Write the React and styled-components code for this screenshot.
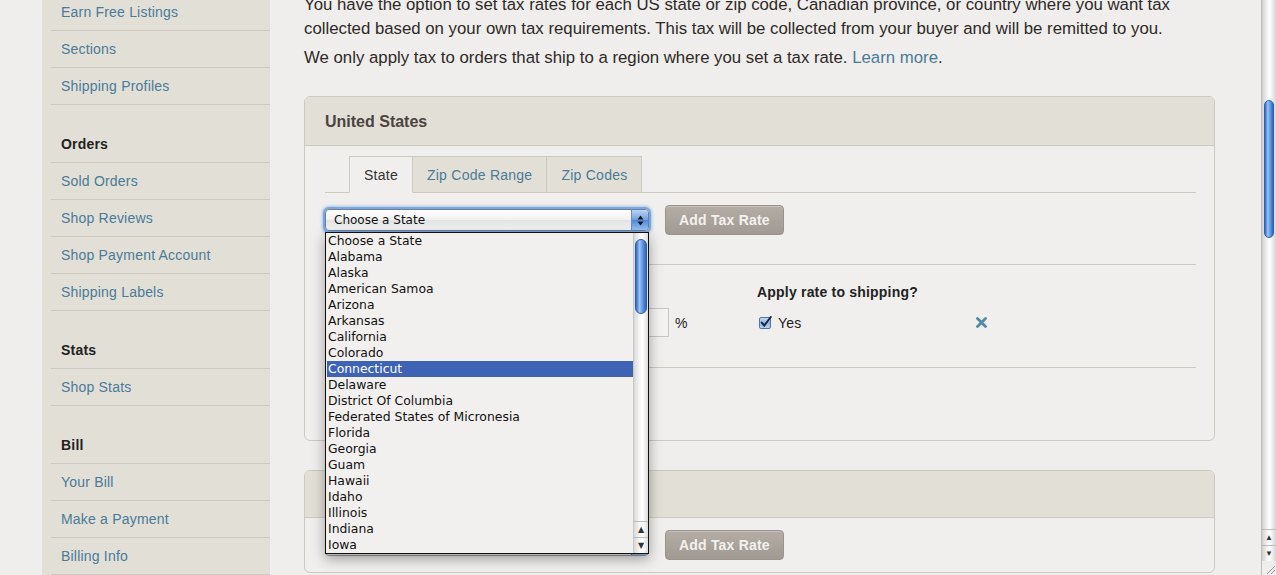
import React from "react";
import styled, { createGlobalStyle } from "styled-components";

const Global = createGlobalStyle`
  html, body { margin: 0; padding: 0; background: #efeeec; overflow: hidden; }
  * { box-sizing: border-box; }
`;

const LINK = "#4a7b97";
const LINE = "#cdc9c0";

const Window = styled.div`
  display: flex;
  width: 1276px;
  height: 575px;
  overflow: hidden;
  font-family: "Liberation Sans", Arial, sans-serif;
`;

const Page = styled.div`
  flex: 1;
  display: flex;
  align-items: stretch;
  padding-left: 42px;
  background: #efeeec;
  overflow: hidden;
`;

const Sidebar = styled.nav`
  width: 228px;
  flex: none;
  background: #e2dfd7;
  padding-left: 9px;
  margin-top: -6px;
`;

const NavItem = styled.div`
  height: 37px;
  border-bottom: 1px solid ${LINE};
  padding-left: 10px;
  display: flex;
  align-items: center;
  font-size: 14px;
  letter-spacing: 0.2px;
  color: ${(p) => (p.$heading ? "#222" : LINK)};
  font-weight: ${(p) => (p.$heading ? "bold" : "normal")};
  margin-top: ${(p) => (p.$heading ? "21px" : "0")};
`;

const Main = styled.main`
  width: 911px;
  margin-left: 34px;
  margin-top: -7px;
  flex: none;
`;

const Para = styled.p`
  margin: 0 0 5px;
  font-size: 16.8px;
  line-height: 24px;
  color: #2e2a27;
`;

const Link = styled.a`
  color: ${LINK};
  text-decoration: none;
`;

const Panel = styled.section`
  border: 1px solid ${LINE};
  border-radius: 6px;
  background: #f0efed;
  margin-top: ${(p) => p.$mt || "0"};
`;

const PanelHeader = styled.header`
  height: ${(p) => p.$h || 49}px;
  background: #e2dfd6;
  border-bottom: 1px solid ${LINE};
  border-radius: 5px 5px 0 0;
  padding: 2px 0 0 20px;
  display: flex;
  align-items: center;
  font-size: 16px;
  font-weight: bold;
  color: #4a4440;
`;

const PanelBody = styled.div`
  padding: ${(p) => p.$pad || "10px 18px 72px 20px"};
`;

const TabBar = styled.div`
  display: flex;
  padding-left: 24px;
  border-bottom: 1px solid ${LINE};
  height: 37px;
`;

const Tab = styled.div`
  height: 37px;
  padding: 0 14px;
  display: flex;
  align-items: center;
  font-size: 14px;
  letter-spacing: 0.25px;
  border: 1px solid ${LINE};
  border-left-width: ${(p) => (p.$first ? "1px" : "0")};
  border-bottom-color: ${(p) => (p.$active ? "#f0efed" : LINE)};
  background: ${(p) => (p.$active ? "#f0efed" : "#e2dfd6")};
  color: ${(p) => (p.$active ? "#333" : LINK)};
`;

const SelectRow = styled.div`
  display: flex;
  align-items: center;
  height: 30px;
  margin-top: ${(p) => p.$mt || "12px"};
`;

const SelectWrap = styled.div`
  position: relative;
  width: 324px;
  height: 22px;
`;

const SelectBox = styled.div`
  width: 100%;
  height: 100%;
  border: 1px solid ${(p) => (p.$focused ? "#6c7f9c" : "#9a9a9a")};
  border-radius: 4px;
  background: linear-gradient(#ffffff, #f1f1f1 50%, #e3e3e3 51%, #f4f4f4);
  box-shadow: ${(p) =>
    p.$focused ? "0 0 0 2px #7aa6e0, 0 0 3px 3px rgba(110, 160, 225, 0.55)" : "none"};
  display: flex;
  align-items: center;
  padding-left: 8px;
  font-family: "DejaVu Sans", "Liberation Sans", sans-serif;
  font-size: 12px;
  color: #111;
  position: relative;
  overflow: hidden;
`;

const SelectArrows = styled.div`
  position: absolute;
  right: 0;
  top: 0;
  bottom: 0;
  width: 17px;
  background: linear-gradient(#b9d3f3, #6f9fe2 50%, #4f86d8 51%, #9cc3f2);
  border-left: 1px solid #6b8cc0;
  display: flex;
  align-items: center;
  justify-content: center;
`;

const Button = styled.button`
  height: 30px;
  margin-left: 16px;
  padding: 0 13px;
  border: 1px solid #9a938b;
  border-radius: 4px;
  background: linear-gradient(#b3ada6, #a19a92);
  color: #f3f1ed;
  font-family: "Liberation Sans", Arial, sans-serif;
  font-weight: bold;
  font-size: 14px;
  letter-spacing: 0.2px;
  box-shadow: inset 0 1px 0 rgba(255, 255, 255, 0.25);
`;

const Table = styled.div`
  margin-top: 29px;
  border-top: 1px solid ${LINE};
  border-bottom: 1px solid ${LINE};
`;

const Grid = styled.div`
  display: grid;
  grid-template-columns: 235px 197px 219px 1fr;
  align-items: center;
  padding: ${(p) => p.$pad};
  font-size: 14px;
  line-height: 18px;
  letter-spacing: 0.2px;
  color: #222;
`;

const HeadCell = styled.div`
  font-weight: bold;
  min-height: 18px;
`;

const RateCell = styled.div`
  display: flex;
  align-items: center;
  padding-left: 49px;
  gap: 6px;
`;

const RateInput = styled.div`
  width: 60px;
  height: 29px;
  border: 1px solid #c9c6c0;
  background: #f3f2f0;
`;

const CheckCell = styled.div`
  display: flex;
  align-items: center;
  gap: 6px;
  padding-left: 2px;
`;

const RemoveCell = styled.div`
  display: flex;
  align-items: center;
`;

const Dropdown = styled.div`
  position: absolute;
  top: 23px;
  left: 0;
  width: 324px;
  height: 322px;
  border: 1px solid #111;
  background: #f1f0ee;
  box-shadow: 0 5px 12px rgba(0, 0, 0, 0.35);
  z-index: 10;
  display: flex;
  font-family: "DejaVu Sans", "Liberation Sans", sans-serif;
  font-size: 12.4px;
  color: #111;
`;

const Options = styled.ul`
  list-style: none;
  margin: 0;
  padding: 0 0 0 1px;
  flex: 1;
`;

const Option = styled.li`
  height: 16px;
  line-height: 16px;
  padding-left: 1px;
  white-space: nowrap;
  background: ${(p) => (p.$selected ? "#3e63b4" : "transparent")};
  color: ${(p) => (p.$selected ? "#fff" : "#111")};
`;

const ListScroll = styled.div`
  width: 15px;
  flex: none;
  display: flex;
  flex-direction: column;
  background: linear-gradient(to right, #d8d8d8, #f7f7f7 40%, #ffffff 60%, #dcdcdc);
  border-left: 1px solid #c8c8c8;
`;

const Track = styled.div`
  flex: 1;
  padding: 6px 1px 0;
`;

const Thumb = styled.div`
  height: ${(p) => p.$h}px;
  border-radius: 7px;
  border: 1px solid #2f5fae;
  background: linear-gradient(to right, #2e66c6, #9cc4f4 35%, #6aa0e8 60%, #2f64c0);
  margin-top: ${(p) => p.$top || 0}px;
`;

const ArrowBtn = styled.div`
  height: 16px;
  border-top: 1px solid #bdbdbd;
  display: flex;
  align-items: center;
  justify-content: center;
  font-size: 8px;
  color: #333;
`;

const PageScroll = styled.div`
  width: 15px;
  flex: none;
  display: flex;
  flex-direction: column;
  background: linear-gradient(to right, #cfcfcf, #f2f2f2 35%, #ffffff 55%, #d5d5d5);
  border-left: 1px solid #bdbdbd;
`;

const PageTrack = styled.div`
  flex: 1;
  padding: 0 2px;
`;

const Grip = styled.div`
  height: 14px;
  background: #efeeec;
  display: flex;
  align-items: flex-end;
  justify-content: flex-end;
`;

const states = [
  "Choose a State", "Alabama", "Alaska", "American Samoa", "Arizona", "Arkansas",
  "California", "Colorado", "Connecticut", "Delaware", "District Of Columbia",
  "Federated States of Micronesia", "Florida", "Georgia", "Guam", "Hawaii",
  "Idaho", "Illinois", "Indiana", "Iowa",
];

const nav = [
  ["Earn Free Listings"], ["Sections"], ["Shipping Profiles"],
  ["Orders", true], ["Sold Orders"], ["Shop Reviews"], ["Shop Payment Account"], ["Shipping Labels"],
  ["Stats", true], ["Shop Stats"],
  ["Bill", true], ["Your Bill"], ["Make a Payment"], ["Billing Info"],
];

const UpDown = () => (
  <svg width="7" height="11" viewBox="0 0 7 11">
    <path d="M3.5 0.5 L6.5 4.5 H0.5 Z" fill="#1a1a1a" />
    <path d="M3.5 10.5 L6.5 6.5 H0.5 Z" fill="#1a1a1a" />
  </svg>
);

const Checkbox = () => (
  <svg width="13" height="13" viewBox="0 0 13 13">
    <defs>
      <linearGradient id="cb" x1="0" y1="0" x2="0" y2="1">
        <stop offset="0" stopColor="#c9dcf4" />
        <stop offset="0.5" stopColor="#8fb5e6" />
        <stop offset="1" stopColor="#b7d2f3" />
      </linearGradient>
    </defs>
    <rect x="0.5" y="1.5" width="11" height="11" rx="1.5" fill="url(#cb)" stroke="#56739c" />
    <path d="M2.8 6.6 L5.2 9.6 L11.8 1" fill="none" stroke="#1c2a40" strokeWidth="2" strokeLinecap="round" />
  </svg>
);

const Cross = () => (
  <svg width="11" height="11" viewBox="0 0 11 11">
    <path d="M1.5 1.5 L9.5 9.5 M9.5 1.5 L1.5 9.5" stroke="#4f8aa6" strokeWidth="2.8" strokeLinecap="round" />
  </svg>
);

export default function App() {
  return (
    <>
      <Global />
      <Window>
        <Page>
          <Sidebar>
            {nav.map(([label, heading]) => (
              <NavItem key={label} $heading={heading}>{label}</NavItem>
            ))}
          </Sidebar>
          <Main>
            <Para>
              You have the option to set tax rates for each US state or zip code, Canadian province, or country where you want tax
              collected based on your own tax requirements. This tax will be collected from your buyer and will be remitted to you.
            </Para>
            <Para>
              We only apply tax to orders that ship to a region where you set a tax rate. <Link>Learn more</Link>.
            </Para>

            <Panel $mt="26px">
              <PanelHeader>United States</PanelHeader>
              <PanelBody>
                <TabBar>
                  <Tab $active $first>State</Tab>
                  <Tab>Zip Code Range</Tab>
                  <Tab>Zip Codes</Tab>
                </TabBar>
                <SelectRow>
                  <SelectWrap>
                    <SelectBox $focused>
                      Choose a State
                      <SelectArrows><UpDown /></SelectArrows>
                    </SelectBox>
                    <Dropdown>
                      <Options>
                        {states.map((s) => (
                          <Option key={s} $selected={s === "Connecticut"}>{s}</Option>
                        ))}
                      </Options>
                      <ListScroll>
                        <Track><Thumb $h={75} /></Track>
                        <ArrowBtn>▲</ArrowBtn>
                        <ArrowBtn>▼</ArrowBtn>
                      </ListScroll>
                    </Dropdown>
                  </SelectWrap>
                  <Button>Add Tax Rate</Button>
                </SelectRow>
                <Table>
                  <Grid $pad="18px 0 4px">
                    <HeadCell />
                    <HeadCell />
                    <HeadCell>Apply rate to shipping?</HeadCell>
                    <div />
                  </Grid>
                  <Grid $pad="3px 0 30px">
                    <div />
                    <RateCell><RateInput />%</RateCell>
                    <CheckCell><Checkbox />Yes</CheckCell>
                    <RemoveCell><Cross /></RemoveCell>
                  </Grid>
                </Table>
              </PanelBody>
            </Panel>

            <Panel $mt="29px">
              <PanelHeader $h={47} />
              <PanelBody $pad="0 18px 12px 20px">
                <SelectRow $mt="12px">
                  <SelectWrap>
                    <SelectBox>
                      <SelectArrows><UpDown /></SelectArrows>
                    </SelectBox>
                  </SelectWrap>
                  <Button>Add Tax Rate</Button>
                </SelectRow>
              </PanelBody>
            </Panel>
          </Main>
        </Page>
        <PageScroll>
          <PageTrack>
            <Thumb $h={138} $top={100} />
          </PageTrack>
          <ArrowBtn>▲</ArrowBtn>
          <ArrowBtn>▼</ArrowBtn>
          <Grip>
            <svg width="12" height="12" viewBox="0 0 12 12">
              <path d="M11 3 L3 11 M11 7 L7 11" stroke="#999" strokeWidth="1" />
            </svg>
          </Grip>
        </PageScroll>
      </Window>
    </>
  );
}
